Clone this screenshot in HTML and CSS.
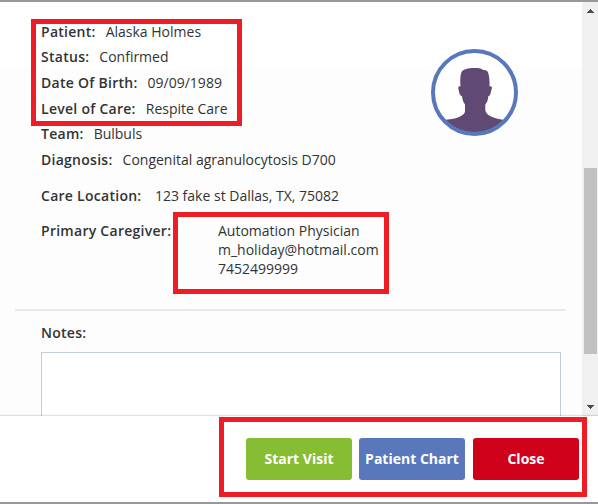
FILE: index.html
```html
<!DOCTYPE html>
<html lang="en">
<head>
<meta charset="utf-8">
<title>Visit details</title>
<link rel="stylesheet" href="styles.css">
</head>
<body>
<div class="dialog">
  <div class="main">
    <div class="content">
      <section class="details">
        <dl class="facts">
          <div class="row"><dt>Patient:</dt><dd>Alaska Holmes</dd></div>
          <div class="row"><dt>Status:</dt><dd>Confirmed</dd></div>
          <div class="row"><dt>Date Of Birth:</dt><dd>09/09/1989</dd></div>
          <div class="row"><dt>Level of Care:</dt><dd>Respite Care</dd></div>
          <div class="row"><dt>Team:</dt><dd>Bulbuls</dd></div>
          <div class="row"><dt>Diagnosis:</dt><dd>Congenital agranulocytosis D700</dd></div>
          <div class="row location"><dt>Care Location:</dt><dd>123 fake st Dallas, TX, 75082</dd></div>
          <div class="row caregiver"><dt>Primary Caregiver:</dt><dd>Automation Physician<br>m_holiday@hotmail.com<br>7452499999</dd></div>
        </dl>
        <svg class="avatar" viewBox="0 0 88 88" width="88" height="88">
          <defs><clipPath id="face"><circle cx="43.5" cy="43.5" r="40"/></clipPath></defs>
          <circle cx="43.5" cy="43.5" r="41.5" fill="#fff"/>
          <path clip-path="url(#face)" fill="#604a73" d="M31 22C34 19.5 39 19 44 19C48 19 51 19.500 52 21C55 20.500 57 22 57.500 25C58.500 29 58.700 33 58.500 37.500C60 37 61.200 37.800 60.800 39.500L59.500 44.500C59.200 46 58.500 47 57.300 47.300C57 51 56 54 54.300 55.500V61C54.500 64 57 66 60 67.500C64 69.500 69 70.500 74 71V88H13V71C18 70.500 24 70 28 68C31 66.500 34 65 34 62V55.500C32.300 53.500 31.300 50.500 31 47.300C29.500 47 28.700 45.500 28.300 44L27.300 39.500C27 38 28 37 29.500 37.500C29 31 29.300 25 31 22Z"/>
          <circle cx="43.500" cy="43.500" r="41.500" fill="none" stroke="#5977bb" stroke-width="4"/>
        </svg>
      </section>
      <section class="notes">
        <label for="notes">Notes:</label>
        <div class="field" id="notes"></div>
      </section>
    </div>
    <div class="scrollbar">
      <svg class="arrow" width="7" height="4" viewBox="0 0 7 4" shape-rendering="crispEdges"><path d="M3 0h1v1h1v1h1v1h1v1H0V3h1V2h1V1h1z"/></svg>
      <div class="thumb"></div>
      <svg class="arrow down" width="7" height="4" viewBox="0 0 7 4" shape-rendering="crispEdges"><path d="M0 0h7v1H6v1H5v1H4v1H3V3H2V2H1V1H0z"/></svg>
    </div>
  </div>
  <footer class="actions">
    <button class="start">Start Visit</button>
    <button class="chart">Patient Chart</button>
    <button class="close">Close</button>
  </footer>
</div>
<div class="mark mark-facts"></div>
<div class="mark mark-caregiver"></div>
<div class="mark mark-actions"></div>
</body>
</html>
```

FILE: styles.css
```css
* { box-sizing: border-box; }
body {
  margin: 0;
  width: 598px;
  height: 504px;
  overflow: hidden;
  position: relative;
  background: #fff;
  color: #333;
  font: 14px/20px "Open Sans", sans-serif;
}
.dialog {
  height: 504px;
  border-top: 2px solid #999;
  border-bottom: 2px solid #999;
  display: flex;
  flex-direction: column;
}
.main { height: 414px; display: flex; overflow: hidden; }
.content {
  width: 582px;
  padding: 0 16px 0 15px;
  background: linear-gradient(#fff 65px, #fdfdfd 65px);
}
.details {
  display: flex;
  height: 309px;
  padding: 19.75px 0 0 26px;
  border-bottom: 2px solid #e9e9e9;
}
.facts { margin: 0; width: 390px; }
.row { display: flex; height: 25.6px; white-space: nowrap; }
dt, label { font-weight: 600; letter-spacing: .27px; }
dd { margin: 0 0 0 10px; }
.location { margin-top: 10.65px; height: 35px; }
.location dd { margin-left: 13.5px; }
.caregiver dt { width: 177px; }
.caregiver dd { margin: 0; line-height: 19px; }
.avatar { margin-top: 27.25px; flex: none; }
.notes { padding: 12px 0 0 26px; }
.notes label { display: block; }
.field {
  width: 520px;
  height: 80px;
  margin-top: 9px;
  border: 1px solid #c0cfdd;
  background: #fff;
}
.scrollbar {
  width: 16px;
  display: flex;
  flex-direction: column;
  align-items: center;
  background: #f0f0f0;
  padding-top: 7px;
}
.arrow { fill: #4d4d4d; flex: none; }
.thumb {
  width: 13px;
  height: 186px;
  margin: 155px 0 51px;
  background: #c1c1c1;
}
.actions {
  flex: 1;
  display: flex;
  align-items: flex-start;
  gap: 7px;
  padding: 22px 0 0 246px;
  background: #fff;
  box-shadow: 0 -1px 1px rgba(0, 0, 0, .12);
  position: relative;
}
button {
  width: 106px;
  height: 42px;
  padding: 0;
  border: 0;
  border-radius: 3px;
  color: #fff;
  font: 700 14px/42px "Open Sans", sans-serif;
}
.start { background: #86bd32; }
.chart { background: #5977bb; }
.close { background: #d0011b; margin-left: 1px; }
.mark { position: absolute; border: 5px solid #ee1c24; }
.mark-facts { left: 31px; top: 19px; width: 211px; height: 107px; }
.mark-caregiver { left: 173px; top: 212px; width: 216px; height: 82px; }
.mark-actions { left: 219px; top: 417px; width: 368px; height: 80px; }
```
